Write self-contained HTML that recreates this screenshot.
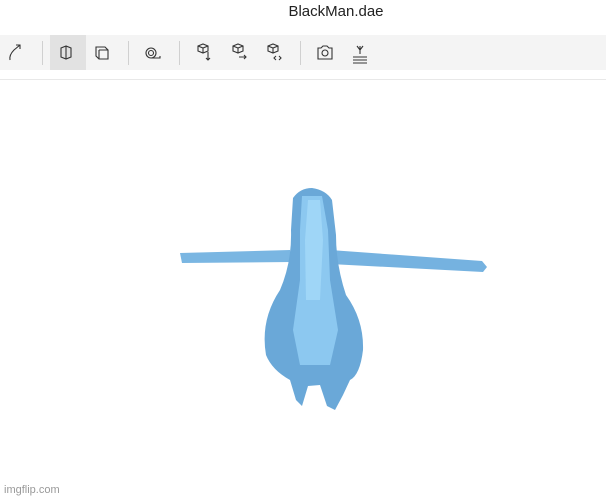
<!DOCTYPE html>
<html><head><meta charset="utf-8"><style>
body{margin:0;width:606px;height:500px;background:#fff;font-family:"Liberation Sans",sans-serif;overflow:hidden;position:relative}
.title{position:absolute;top:3px;left:0;width:672px;text-align:center;font-size:15px;color:#222}
.bar{position:absolute;top:35px;left:0;width:606px;height:35px;background:#f4f4f4}
.hl{position:absolute;top:35px;left:50px;width:36px;height:35px;background:#e2e2e2}
.sep{position:absolute;top:41px;width:1px;height:24px;background:#d0d0d0}
.line{position:absolute;top:79px;left:0;width:606px;height:1px;background:#e8e8e8}
.wm{position:absolute;left:4px;top:484px;font-size:11px;color:#999}
svg{position:absolute;left:0;top:0}
</style></head><body>
<div class="title">BlackMan.dae</div>
<div class="bar"></div><div class="hl"></div>
<div class="sep" style="left:42px"></div><div class="sep" style="left:128px"></div>
<div class="sep" style="left:179px"></div><div class="sep" style="left:300px"></div>
<div class="line"></div>
<svg width="606" height="500" fill="none" stroke="#333" stroke-width="1.1">
<path d="M10 60 Q9 55 14 50 L20 45 M16 45 L20 45 L20 49"/>
<path d="M66 46 L61 48 L61 57 L66 59 L71 57 L71 48 Z M66 46 V59"/>
<path d="M96 47 H105 L108 50 V59 H99 L96 56 Z M99 50 H108 M99 50 V59"/>
<circle cx="151" cy="53" r="5"/><circle cx="151" cy="53" r="2.5"/><path d="M151 58 H160 V56"/>
<path d="M198 46 L203 44 L208 46 V51 L203 53 L198 51 Z M198 46 L203 48 L208 46 M203 48 V53 M208 52 V60 M206 58 L208 60 L210 58"/>
<path d="M233 46 L238 44 L243 46 V51 L238 53 L233 51 Z M233 46 L238 48 L243 46 M238 48 V53 M239 57 H246 M244 55 L246 57 L244 59"/>
<path d="M268 46 L273 44 L278 46 V51 L273 53 L268 51 Z M268 46 L273 48 L278 46 M273 48 V53 M276 56 L274 58 L276 60 M279 56 L281 58 L279 60"/>
<path d="M318 48 H321 L323 46 H327 L329 48 H332 V59 H318 Z"/><circle cx="325" cy="53" r="3"/>
<path d="M353 57 H367 M353 60 H367 M353 63 H367 M360 46 V54 M357 46 L360 50 L363 46"/>
</svg>
<svg width="606" height="500">
<path d="M180 253 L290 250 L292 262 L182 263 Z" fill="#7ab6e2"/>
<path d="M330 250 L482 261 L487 267 L483 272 L330 264 Z" fill="#75b2e0"/>
<path d="M312 188 Q326 190 332 200 L336 235 Q336 265 346 295 Q364 320 363 350 Q360 375 350 380 L343 395 L335 410 L327 406 L320 385 L308 386 L302 406 L296 400 L290 380 Q272 370 266 355 Q260 320 280 290 Q292 262 291 230 L293 198 Q300 188 312 188 Z" fill="#6aa8d8"/>
<path d="M302 196 L322 196 L328 230 L330 280 L338 330 L330 365 L300 365 L293 330 L300 280 L300 230 Z" fill="#8cc8f0"/>
<path d="M308 200 L320 200 L323 240 L320 300 L306 300 L305 240 Z" fill="#9fd6f7"/>
</svg>
<div class="wm">imgflip.com</div>
</body></html>
